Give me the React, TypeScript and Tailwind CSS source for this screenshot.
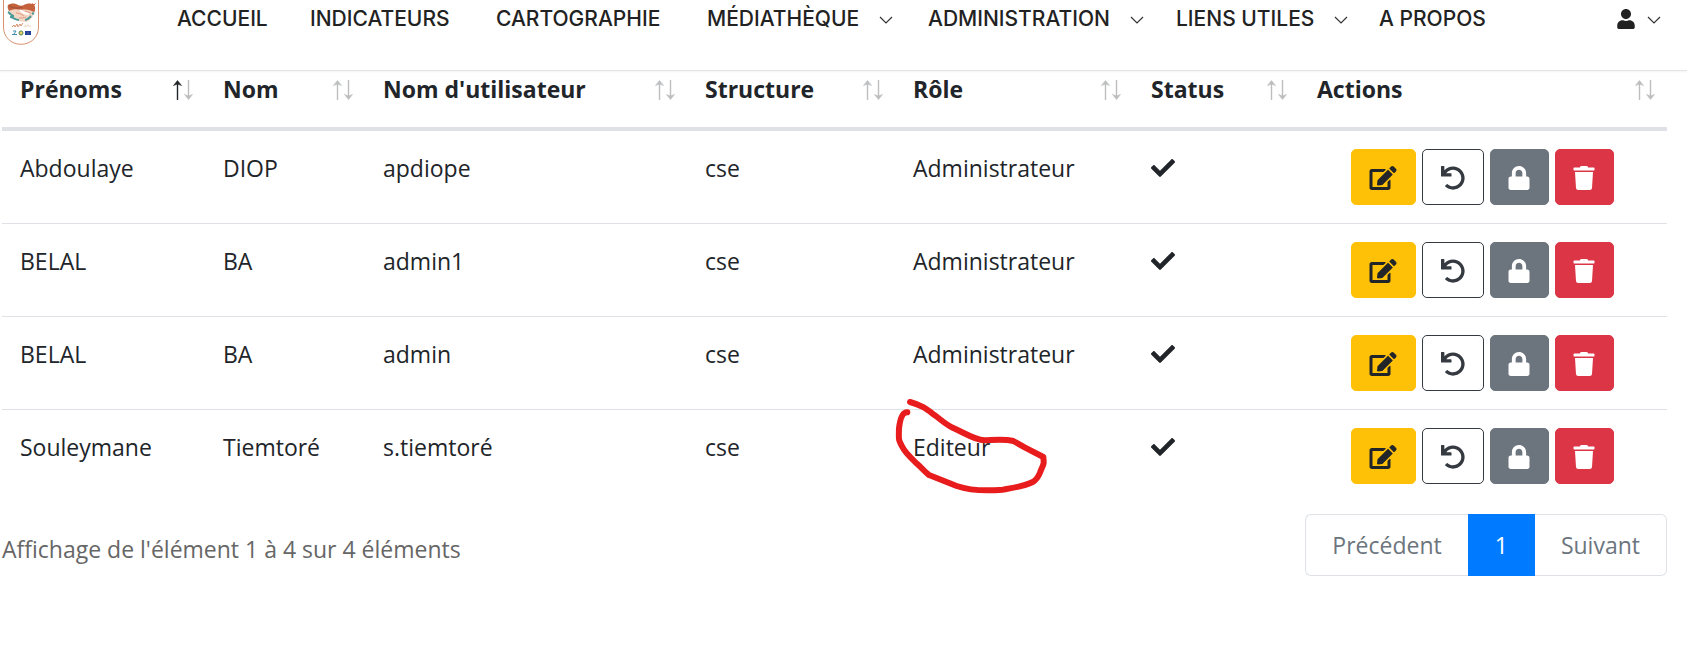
import { FaCheck, FaEdit, FaLock, FaTrash, FaUndo, FaUser } from 'react-icons/fa';

type NavItem = { label: string; hasMenu?: boolean };

type User = {
  firstName: string;
  lastName: string;
  username: string;
  structure: string;
  role: string;
  circled?: boolean;
};

const NAV_ITEMS: NavItem[] = [
  { label: 'ACCUEIL' },
  { label: 'INDICATEURS' },
  { label: 'CARTOGRAPHIE' },
  { label: 'MÉDIATHÈQUE', hasMenu: true },
  { label: 'ADMINISTRATION', hasMenu: true },
  { label: 'LIENS UTILES', hasMenu: true },
  { label: 'A PROPOS' },
];

const COLUMNS = [
  { label: 'Prénoms', width: 'w-[203px]' },
  { label: 'Nom', width: 'w-[160px]' },
  { label: "Nom d'utilisateur", width: 'w-[322px]' },
  { label: 'Structure', width: 'w-[208px]' },
  { label: 'Rôle', width: 'w-[238px]' },
  { label: 'Status', width: 'w-[166px]' },
  { label: 'Actions', width: 'w-[368px]' },
];

const USERS: User[] = [
  { firstName: 'Abdoulaye', lastName: 'DIOP', username: 'apdiope', structure: 'cse', role: 'Administrateur' },
  { firstName: 'BELAL', lastName: 'BA', username: 'admin1', structure: 'cse', role: 'Administrateur' },
  { firstName: 'BELAL', lastName: 'BA', username: 'admin', structure: 'cse', role: 'Administrateur' },
  { firstName: 'Souleymane', lastName: 'Tiemtoré', username: 's.tiemtoré', structure: 'cse', role: 'Editeur', circled: true },
];

function Logo() {
  return (
    <svg viewBox="0 0 36 45" className="h-[45px] w-9" aria-hidden="true">
      <path d="M.5 0v27C.5 37 8 44.300 18 44.300S35.500 37 35.500 27V0" fill="#fff" stroke="#d9906f" />
      <path d="M5 5c3-2 7-2 10 0 2 1 4 1 6 0 3-2 8-2 10 0 2 2 1 6 0 8-5-3-9-3-13-3-5 0-9 1-12 1-1-2-2-4-1-6z" fill="#c4603c" />
      <path d="M6 6c4 2 9 3 13 1" fill="none" stroke="#994d33" />
      <path d="M6 11c4-2 8-2 12-1 5-1 9 0 13 2 0 4-3 8-8 10-8 0-14-4-17-11z" fill="#f3d5c3" />
      <path d="M17 10l4 3 5 1" fill="none" stroke="#fff" strokeWidth="2" />
      <path d="M5 12c2 1 3 4 6 4M7 17c3 0 5 3 9 3M22 20c3 0 4-2 6-4M29 13l2 1" fill="none" stroke="#4c9a98" strokeWidth="2" />
      <path d="M13 13c3 0 5 1 8 3M16 18c2 0 5 0 7-1M22 11l6 2" fill="none" stroke="#e29b7e" />
      <path d="M29 3.500l2 1.500 1.500-1.500" fill="none" stroke="#d2502f" />
      <path d="M9 27l2-2 1 2 2-3 1 3 2-3 1 2 2-3" fill="none" stroke="#d9906f" />
      <path d="M21 27c1-3 3-2 2 0M25 24v3M27 25v2" fill="none" stroke="#e6d2bd" />
      <path d="M10 31h3l-2 3M9 34.500h5" fill="none" stroke="#3f8fb0" />
      <circle cx="18" cy="33" r="2" fill="#e9d66b" stroke="#55804f" />
      <path d="M22 31h6v4h-6z" fill="#20409a" />
      <path d="M24 33h2" stroke="#5a6a90" />
    </svg>
  );
}

function Chevron() {
  return (
    <svg viewBox="0 0 14 14" className="mt-0.5 size-[14px] shrink-0" fill="none" stroke="#333" strokeWidth="1.200" aria-hidden="true">
      <path d="M1 4l6 6 6-6" />
    </svg>
  );
}

function SortArrows({ active }: { active: boolean }) {
  return (
    <svg viewBox="0 0 20 20" className="mt-0.5 size-5 shrink-0" fill="none" aria-hidden="true">
      <g stroke={active ? '#212529' : '#bcbebf'} fill={active ? '#212529' : '#bcbebf'}>
        <path d="M4.500 2v18" strokeWidth="1.400" />
        <path d="M4.500 .5L8.500 5.500l-4-1.500-4 1.500z" strokeWidth=".6" />
      </g>
      <g stroke="#bcbebf" fill="#bcbebf">
        <path d="M15.500 0v18" strokeWidth="1.400" />
        <path d="M15.500 19.500l-4-5 4 1.500 4-1.500z" strokeWidth=".6" />
      </g>
    </svg>
  );
}

function RedCircle() {
  return (
    <svg
      viewBox="0 0 720 390"
      className="pointer-events-none absolute -top-[30px] -left-[35px] z-10 h-[130px] w-[240px] max-w-none"
      fill="none"
      stroke="#e81c1c"
      strokeWidth="18"
      strokeLinecap="round"
      strokeLinejoin="round"
      aria-hidden="true"
    >
      <path d="M150 66C190 77 202 89 226 107C245 121 258 134 278 143C310 157 345 180 373 181C402 180 432 176 460 183L494 202L550 231C552 250 552 250 544 268C537 284 535 297 518 306C490 320 450 325 428 329C370 334 325 330 290 318L207 285C190 272 190 268 172 252C153 234 136 220 126 199C115 178 116 180 117 145C120 120 127 96 142 97" />
    </svg>
  );
}

function RowActions() {
  const base = 'flex h-14 items-center justify-center rounded-[5px] border pt-0.5 text-2xl';
  return (
    <div className="flex justify-center gap-1.5">
      <button type="button" aria-label="Modifier" className={`${base} w-[65px] border-[#ffc107] bg-[#ffc107] text-[#212529]`}>
        <FaEdit className="h-6 w-7" />
      </button>
      <button type="button" aria-label="Réinitialiser" className={`${base} w-[62px] border-[#343a40] bg-white text-[#343a40]`}>
        <FaUndo />
      </button>
      <button type="button" aria-label="Verrouiller" className={`${base} w-[59px] border-[#6c757d] bg-[#6c757d] text-white`}>
        <FaLock />
      </button>
      <button type="button" aria-label="Supprimer" className={`${base} w-[59px] border-[#dc3545] bg-[#dc3545] text-white`}>
        <FaTrash />
      </button>
    </div>
  );
}

export default function App() {
  return (
    <div className="min-h-screen bg-white font-['Open_Sans',sans-serif] text-[23px] leading-9 text-[#212529]">
      <header className="flex h-[71px] items-start border-b border-[#e4e4e4] pr-[26px] pl-[3px] shadow-xs">
        <a href="#" aria-label="Accueil">
          <Logo />
        </a>
        <nav className="ml-[138px] pt-1 font-['Inter',sans-serif] text-[21px] leading-[30px] font-medium text-[#222]">
          <ul className="grid grid-cols-[133px_186px_211px_221px_248px_203px_auto] whitespace-nowrap">
            {NAV_ITEMS.map((item) => (
              <li key={item.label}>
                <a href="#" className="flex items-center gap-5">
                  {item.label}
                  {item.hasMenu && <Chevron />}
                </a>
              </li>
            ))}
          </ul>
        </nav>
        <button type="button" aria-label="Mon compte" className="ml-auto flex h-[38px] items-center gap-3 text-[#222]">
          <FaUser className="h-5 w-[18px]" />
          <Chevron />
        </button>
      </header>

      <main className="pr-5 pl-0.5">
        <table className="w-full table-fixed border-collapse text-left">
          <thead>
            <tr className="border-b-4 border-[#dee2e6]">
              {COLUMNS.map((col, i) => (
                <th key={col.label} scope="col" className={`${col.width} pr-3 pb-5 pl-[18px] font-bold whitespace-nowrap`}>
                  <div className="flex items-center justify-between">
                    {col.label}
                    <SortArrows active={i === 0} />
                  </div>
                </th>
              ))}
            </tr>
          </thead>
          <tbody>
            {USERS.map((user) => (
              <tr key={user.username} className="border-t border-[#dee2e6] align-top first:border-t-0">
                <td className="px-[18px] pt-[19px]">{user.firstName}</td>
                <td className="px-[18px] pt-[19px]">{user.lastName}</td>
                <td className="px-[18px] pt-[19px]">{user.username}</td>
                <td className="px-[18px] pt-[19px]">{user.structure}</td>
                <td className="relative px-[18px] pt-[19px]">
                  {user.role}
                  {user.circled && <RedCircle />}
                </td>
                <td className="px-[18px] pt-[19px]">
                  <FaCheck className="mt-1.5 size-6" aria-label="Actif" />
                </td>
                <td className="py-[18px] pr-5 pl-[18px]">
                  <RowActions />
                </td>
              </tr>
            ))}
          </tbody>
        </table>

        <div className="mt-3 flex items-center justify-between">
          <p className="pt-2 text-[#666]">Affichage de l'élément 1 à 4 sur 4 éléments</p>
          <nav aria-label="Pagination" className="flex">
            <button type="button" className="rounded-l-md border border-r-0 border-[#dee2e6] px-[26px] py-3 text-[#6c757d]">
              Précédent
            </button>
            <button type="button" className="border border-[#007bff] bg-[#007bff] px-[26px] py-3 text-white">
              1
            </button>
            <button type="button" className="rounded-r-md border border-l-0 border-[#dee2e6] px-[26px] py-3 text-[#6c757d]">
              Suivant
            </button>
          </nav>
        </div>
      </main>
    </div>
  );
}
